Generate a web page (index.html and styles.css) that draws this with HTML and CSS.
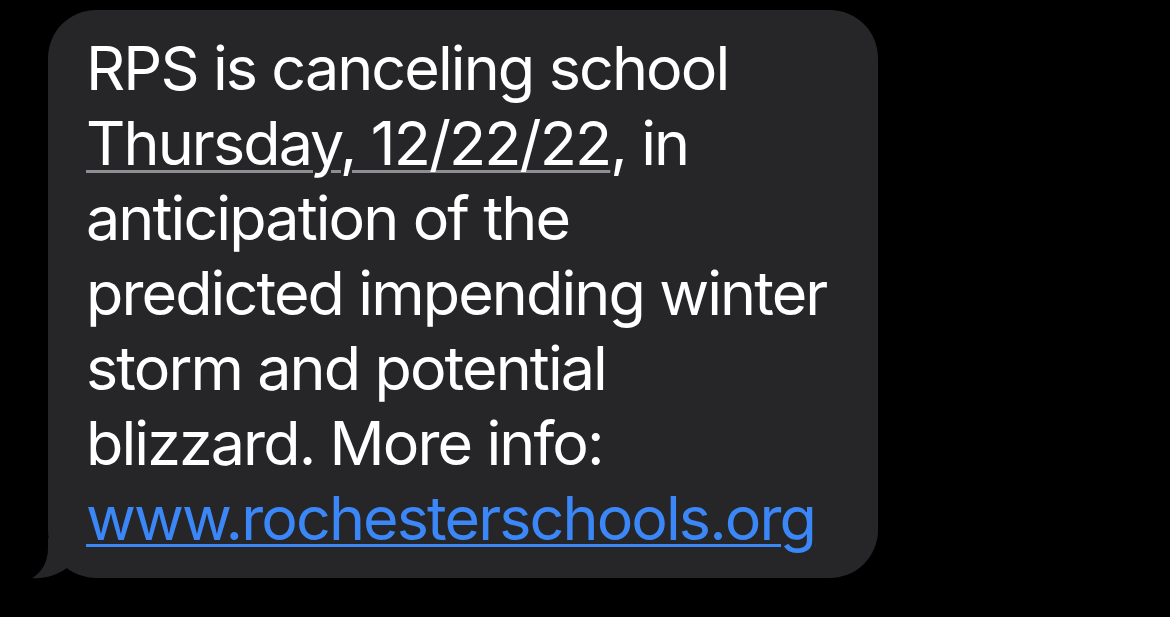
FILE: index.html
```html
<!DOCTYPE html>
<html lang="en">
<head>
<meta charset="utf-8">
<title>Message</title>
<link rel="stylesheet" href="styles.css">
</head>
<body>
<div class="thread">
  <div class="bubble">
    <p class="msg">RPS is canceling school<br><span class="detected">Thursday, 12/22/22</span>, in<br>anticipation of the<br>predicted impending winter<br>storm and potential<br>blizzard. More info:<br><a class="link" href="#">www.rochesterschools.org</a></p>
    <svg class="tail" width="40" height="42" viewBox="0 0 40 42" aria-hidden="true">
      <path d="M17,0 L17,10 C17,25 10,35 1,40 C12,41.5 26,37 36,30 L36,0 Z" fill="#262629"/>
    </svg>
  </div>
</div>
</body>
</html>
```

FILE: styles.css
```css
html, body {
  margin: 0;
  padding: 0;
  background: #000;
  width: 1170px;
  height: 617px;
  overflow: hidden;
}

.thread {
  display: flex;
  padding: 10px 0 0 48px;
}

.bubble {
  position: relative;
  width: 830px;
  box-sizing: border-box;
  background: #262629;
  border-radius: 48px;
  padding: 21px 20px 22px 38px;
}

.msg {
  margin: 0;
  font-family: Inter, "Noto Sans", sans-serif;
  font-size: 61px;
  line-height: 75px;
  letter-spacing: -1.9px;
  color: #fff;
  white-space: nowrap;
}

.detected {
  text-decoration: underline;
  text-decoration-color: #8d8d92;
  text-decoration-thickness: 3px;
  text-underline-offset: 5px;
  text-decoration-skip-ink: auto;
}

.link {
  color: #3b87f7;
  text-decoration: underline;
  text-decoration-thickness: 3px;
  text-underline-offset: 4px;
  text-decoration-skip-ink: auto;
}

.tail {
  position: absolute;
  left: -17px;
  bottom: -2px;
}
```
